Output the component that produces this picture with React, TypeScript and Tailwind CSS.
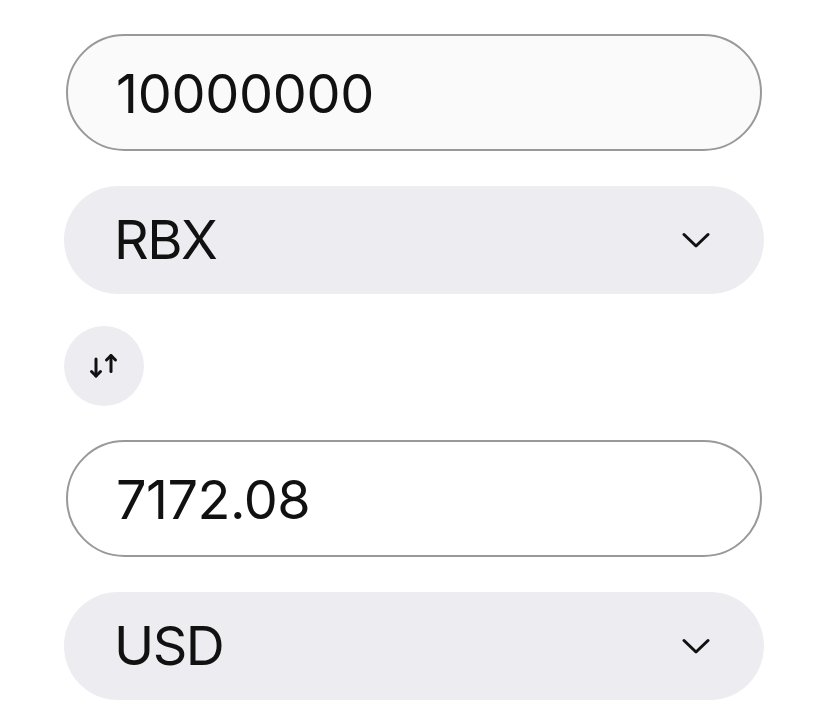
import React from "react";

function Chevron() {
  return (
    <svg width="28" height="17" viewBox="0 0 28 17" fill="none">
      <polyline points="2,2.5 14,14 26,2.5" stroke="#111" strokeWidth="3" strokeLinecap="round" strokeLinejoin="round" />
    </svg>
  );
}

function SwapIcon() {
  return (
    <svg width="30" height="28" viewBox="0 0 30 28" fill="none">
      <line x1="7" y1="7" x2="7" y2="24" stroke="#111" strokeWidth="3" strokeLinecap="round" />
      <polyline points="2.5,19.5 7,24 11.5,19.5" stroke="#111" strokeWidth="3" strokeLinecap="round" strokeLinejoin="round" />
      <line x1="22" y1="3.5" x2="22" y2="19.5" stroke="#111" strokeWidth="3" strokeLinecap="round" />
      <polyline points="17.5,8 22,3.5 26.5,8" stroke="#111" strokeWidth="3" strokeLinecap="round" strokeLinejoin="round" />
    </svg>
  );
}

export default function App() {
  const font = { fontFamily: "Inter, 'Noto Sans', sans-serif" };
  return (
    <div className="w-[828px] h-[717px] bg-white" style={font}>
      <div className="flex flex-col pt-[34px] px-[64px]">
        <div className="mx-[2px] h-[117px] rounded-full border-2 border-[#999999] bg-[#fafafa] flex items-center pl-[48px]">
          <span className="text-[54px] leading-none text-[#111] tracking-[-0.3px] pt-[2px]">10000000</span>
        </div>
        <div className="mt-[35px] h-[108px] rounded-full bg-[#ededf1] flex items-center justify-between pl-[50px] pr-[54px]">
          <span className="text-[54px] leading-none text-[#111] tracking-[-1.5px]">RBX</span>
          <Chevron />
        </div>
        <div className="mt-[32px] w-[80px] h-[80px] rounded-full bg-[#ededf1] flex items-center justify-center">
          <SwapIcon />
        </div>
        <div className="mt-[34px] mx-[2px] h-[117px] rounded-full border-2 border-[#999999] bg-white flex items-center pl-[48px]">
          <span className="text-[54px] leading-none text-[#111] tracking-[-0.5px] pt-[2px]">7172.08</span>
        </div>
        <div className="mt-[35px] h-[108px] rounded-full bg-[#ededf1] flex items-center justify-between pl-[50px] pr-[54px]">
          <span className="text-[54px] leading-none text-[#111] tracking-[-1.5px]">USD</span>
          <Chevron />
        </div>
      </div>
    </div>
  );
}
